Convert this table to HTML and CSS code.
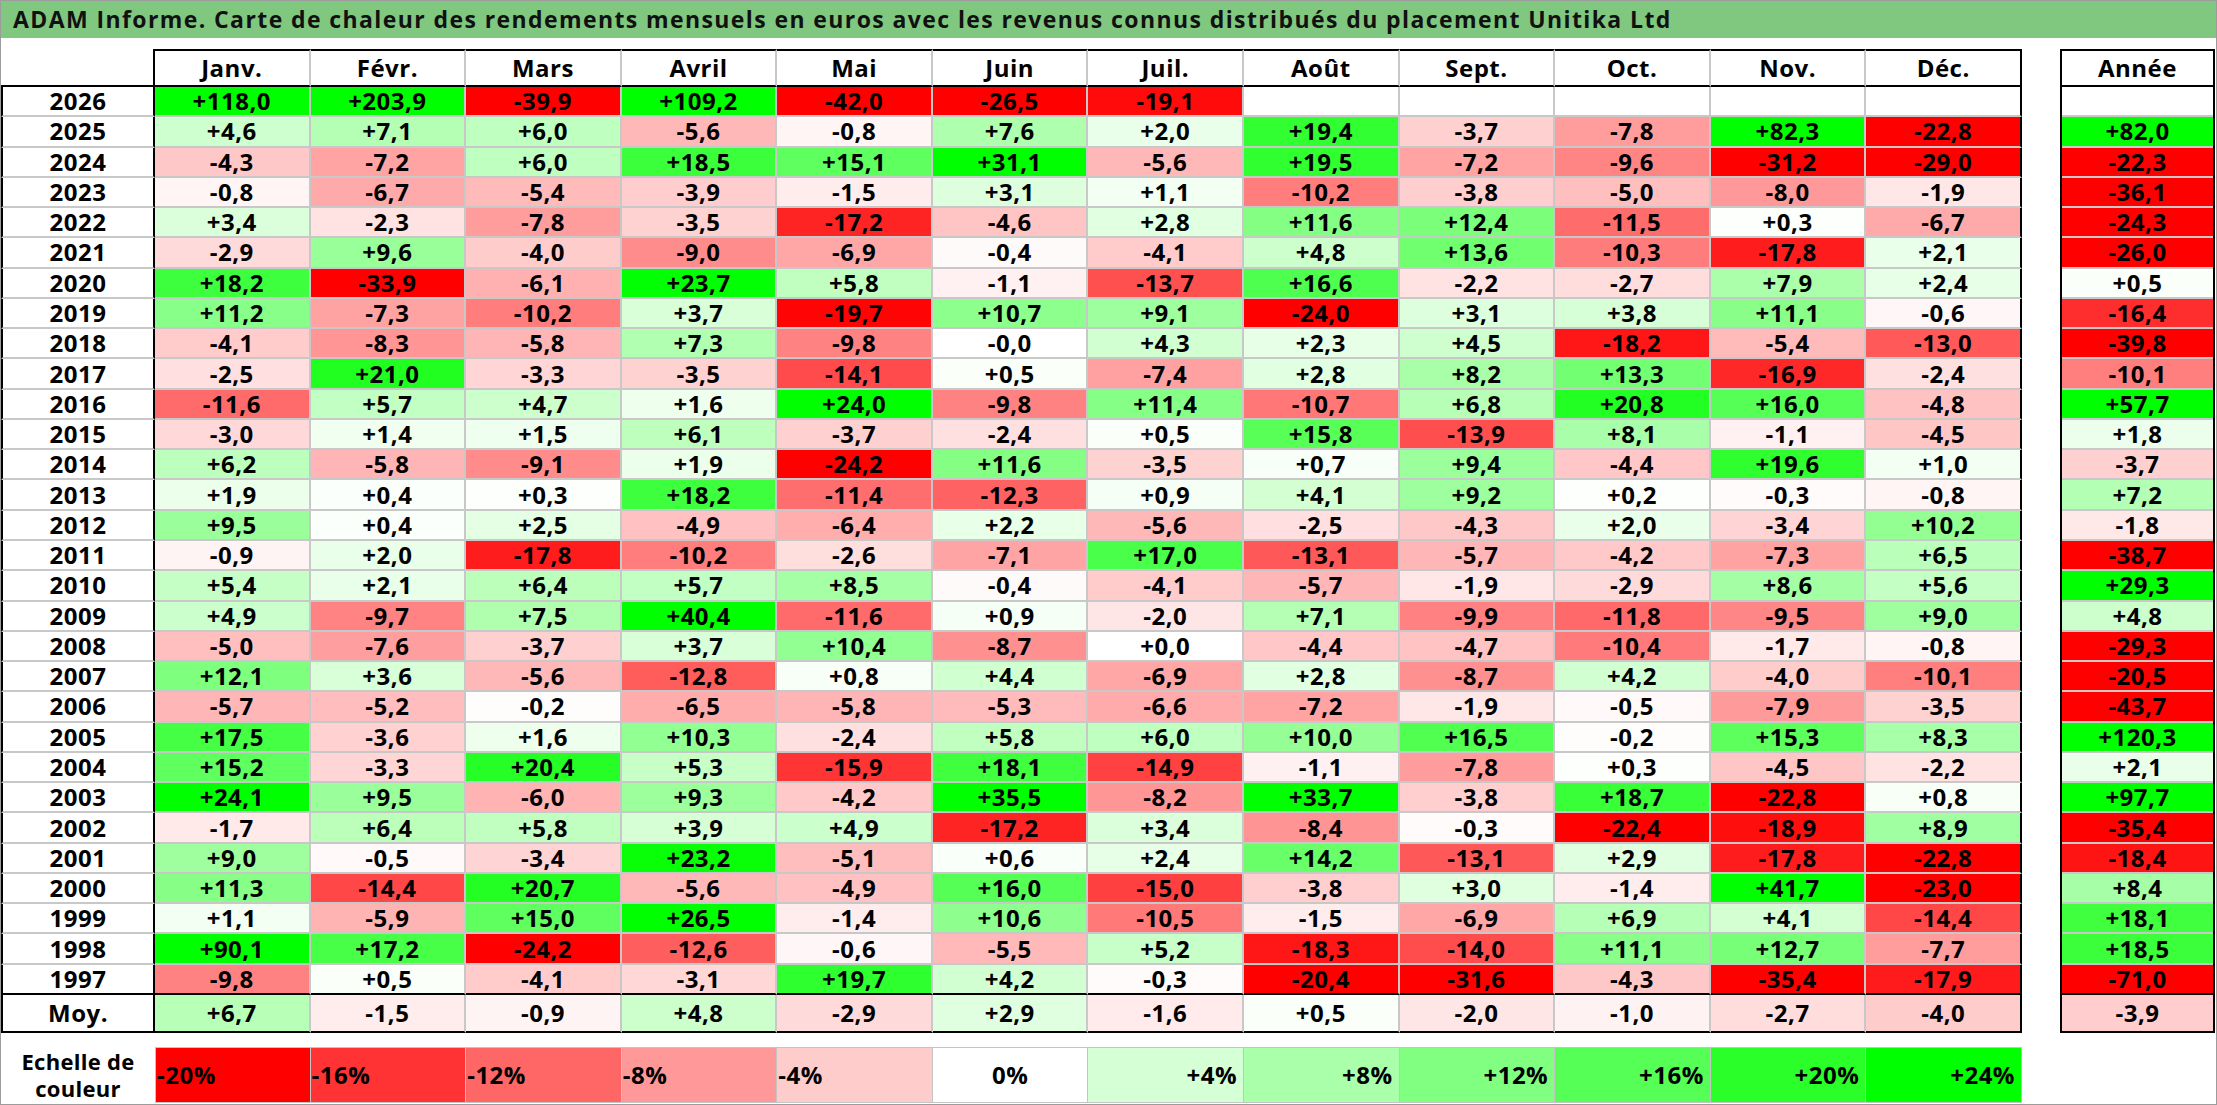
FILE: index.html
```html
<!DOCTYPE html>
<html lang="fr">
<head>
<meta charset="utf-8">
<title>ADAM Informe – Carte de chaleur Unitika Ltd</title>
<link rel="stylesheet" href="styles.css">
</head>
<body>
<div class="sheet">
  <div class="title">ADAM Informe. Carte de chaleur des rendements mensuels en euros avec les revenus connus distribués du placement Unitika Ltd</div>
  <div class="main">
    <div class="heat">
      <div class="row head"><div class="lbl corner"></div><div>Janv.</div><div>Févr.</div><div>Mars</div><div>Avril</div><div>Mai</div><div>Juin</div><div>Juil.</div><div>Août</div><div>Sept.</div><div>Oct.</div><div>Nov.</div><div>Déc.</div></div>
      <div class="row"><div class="lbl">2026</div><div class="v">+118,0</div><div class="v">+203,9</div><div class="v">-39,9</div><div class="v">+109,2</div><div class="v">-42,0</div><div class="v">-26,5</div><div class="v">-19,1</div><div class="v"></div><div class="v"></div><div class="v"></div><div class="v"></div><div class="v"></div></div>
      <div class="row"><div class="lbl">2025</div><div class="v">+4,6</div><div class="v">+7,1</div><div class="v">+6,0</div><div class="v">-5,6</div><div class="v">-0,8</div><div class="v">+7,6</div><div class="v">+2,0</div><div class="v">+19,4</div><div class="v">-3,7</div><div class="v">-7,8</div><div class="v">+82,3</div><div class="v">-22,8</div></div>
      <div class="row"><div class="lbl">2024</div><div class="v">-4,3</div><div class="v">-7,2</div><div class="v">+6,0</div><div class="v">+18,5</div><div class="v">+15,1</div><div class="v">+31,1</div><div class="v">-5,6</div><div class="v">+19,5</div><div class="v">-7,2</div><div class="v">-9,6</div><div class="v">-31,2</div><div class="v">-29,0</div></div>
      <div class="row"><div class="lbl">2023</div><div class="v">-0,8</div><div class="v">-6,7</div><div class="v">-5,4</div><div class="v">-3,9</div><div class="v">-1,5</div><div class="v">+3,1</div><div class="v">+1,1</div><div class="v">-10,2</div><div class="v">-3,8</div><div class="v">-5,0</div><div class="v">-8,0</div><div class="v">-1,9</div></div>
      <div class="row"><div class="lbl">2022</div><div class="v">+3,4</div><div class="v">-2,3</div><div class="v">-7,8</div><div class="v">-3,5</div><div class="v">-17,2</div><div class="v">-4,6</div><div class="v">+2,8</div><div class="v">+11,6</div><div class="v">+12,4</div><div class="v">-11,5</div><div class="v">+0,3</div><div class="v">-6,7</div></div>
      <div class="row"><div class="lbl">2021</div><div class="v">-2,9</div><div class="v">+9,6</div><div class="v">-4,0</div><div class="v">-9,0</div><div class="v">-6,9</div><div class="v">-0,4</div><div class="v">-4,1</div><div class="v">+4,8</div><div class="v">+13,6</div><div class="v">-10,3</div><div class="v">-17,8</div><div class="v">+2,1</div></div>
      <div class="row"><div class="lbl">2020</div><div class="v">+18,2</div><div class="v">-33,9</div><div class="v">-6,1</div><div class="v">+23,7</div><div class="v">+5,8</div><div class="v">-1,1</div><div class="v">-13,7</div><div class="v">+16,6</div><div class="v">-2,2</div><div class="v">-2,7</div><div class="v">+7,9</div><div class="v">+2,4</div></div>
      <div class="row"><div class="lbl">2019</div><div class="v">+11,2</div><div class="v">-7,3</div><div class="v">-10,2</div><div class="v">+3,7</div><div class="v">-19,7</div><div class="v">+10,7</div><div class="v">+9,1</div><div class="v">-24,0</div><div class="v">+3,1</div><div class="v">+3,8</div><div class="v">+11,1</div><div class="v">-0,6</div></div>
      <div class="row"><div class="lbl">2018</div><div class="v">-4,1</div><div class="v">-8,3</div><div class="v">-5,8</div><div class="v">+7,3</div><div class="v">-9,8</div><div class="v">-0,0</div><div class="v">+4,3</div><div class="v">+2,3</div><div class="v">+4,5</div><div class="v">-18,2</div><div class="v">-5,4</div><div class="v">-13,0</div></div>
      <div class="row"><div class="lbl">2017</div><div class="v">-2,5</div><div class="v">+21,0</div><div class="v">-3,3</div><div class="v">-3,5</div><div class="v">-14,1</div><div class="v">+0,5</div><div class="v">-7,4</div><div class="v">+2,8</div><div class="v">+8,2</div><div class="v">+13,3</div><div class="v">-16,9</div><div class="v">-2,4</div></div>
      <div class="row"><div class="lbl">2016</div><div class="v">-11,6</div><div class="v">+5,7</div><div class="v">+4,7</div><div class="v">+1,6</div><div class="v">+24,0</div><div class="v">-9,8</div><div class="v">+11,4</div><div class="v">-10,7</div><div class="v">+6,8</div><div class="v">+20,8</div><div class="v">+16,0</div><div class="v">-4,8</div></div>
      <div class="row"><div class="lbl">2015</div><div class="v">-3,0</div><div class="v">+1,4</div><div class="v">+1,5</div><div class="v">+6,1</div><div class="v">-3,7</div><div class="v">-2,4</div><div class="v">+0,5</div><div class="v">+15,8</div><div class="v">-13,9</div><div class="v">+8,1</div><div class="v">-1,1</div><div class="v">-4,5</div></div>
      <div class="row"><div class="lbl">2014</div><div class="v">+6,2</div><div class="v">-5,8</div><div class="v">-9,1</div><div class="v">+1,9</div><div class="v">-24,2</div><div class="v">+11,6</div><div class="v">-3,5</div><div class="v">+0,7</div><div class="v">+9,4</div><div class="v">-4,4</div><div class="v">+19,6</div><div class="v">+1,0</div></div>
      <div class="row"><div class="lbl">2013</div><div class="v">+1,9</div><div class="v">+0,4</div><div class="v">+0,3</div><div class="v">+18,2</div><div class="v">-11,4</div><div class="v">-12,3</div><div class="v">+0,9</div><div class="v">+4,1</div><div class="v">+9,2</div><div class="v">+0,2</div><div class="v">-0,3</div><div class="v">-0,8</div></div>
      <div class="row"><div class="lbl">2012</div><div class="v">+9,5</div><div class="v">+0,4</div><div class="v">+2,5</div><div class="v">-4,9</div><div class="v">-6,4</div><div class="v">+2,2</div><div class="v">-5,6</div><div class="v">-2,5</div><div class="v">-4,3</div><div class="v">+2,0</div><div class="v">-3,4</div><div class="v">+10,2</div></div>
      <div class="row"><div class="lbl">2011</div><div class="v">-0,9</div><div class="v">+2,0</div><div class="v">-17,8</div><div class="v">-10,2</div><div class="v">-2,6</div><div class="v">-7,1</div><div class="v">+17,0</div><div class="v">-13,1</div><div class="v">-5,7</div><div class="v">-4,2</div><div class="v">-7,3</div><div class="v">+6,5</div></div>
      <div class="row"><div class="lbl">2010</div><div class="v">+5,4</div><div class="v">+2,1</div><div class="v">+6,4</div><div class="v">+5,7</div><div class="v">+8,5</div><div class="v">-0,4</div><div class="v">-4,1</div><div class="v">-5,7</div><div class="v">-1,9</div><div class="v">-2,9</div><div class="v">+8,6</div><div class="v">+5,6</div></div>
      <div class="row"><div class="lbl">2009</div><div class="v">+4,9</div><div class="v">-9,7</div><div class="v">+7,5</div><div class="v">+40,4</div><div class="v">-11,6</div><div class="v">+0,9</div><div class="v">-2,0</div><div class="v">+7,1</div><div class="v">-9,9</div><div class="v">-11,8</div><div class="v">-9,5</div><div class="v">+9,0</div></div>
      <div class="row"><div class="lbl">2008</div><div class="v">-5,0</div><div class="v">-7,6</div><div class="v">-3,7</div><div class="v">+3,7</div><div class="v">+10,4</div><div class="v">-8,7</div><div class="v">+0,0</div><div class="v">-4,4</div><div class="v">-4,7</div><div class="v">-10,4</div><div class="v">-1,7</div><div class="v">-0,8</div></div>
      <div class="row"><div class="lbl">2007</div><div class="v">+12,1</div><div class="v">+3,6</div><div class="v">-5,6</div><div class="v">-12,8</div><div class="v">+0,8</div><div class="v">+4,4</div><div class="v">-6,9</div><div class="v">+2,8</div><div class="v">-8,7</div><div class="v">+4,2</div><div class="v">-4,0</div><div class="v">-10,1</div></div>
      <div class="row"><div class="lbl">2006</div><div class="v">-5,7</div><div class="v">-5,2</div><div class="v">-0,2</div><div class="v">-6,5</div><div class="v">-5,8</div><div class="v">-5,3</div><div class="v">-6,6</div><div class="v">-7,2</div><div class="v">-1,9</div><div class="v">-0,5</div><div class="v">-7,9</div><div class="v">-3,5</div></div>
      <div class="row"><div class="lbl">2005</div><div class="v">+17,5</div><div class="v">-3,6</div><div class="v">+1,6</div><div class="v">+10,3</div><div class="v">-2,4</div><div class="v">+5,8</div><div class="v">+6,0</div><div class="v">+10,0</div><div class="v">+16,5</div><div class="v">-0,2</div><div class="v">+15,3</div><div class="v">+8,3</div></div>
      <div class="row"><div class="lbl">2004</div><div class="v">+15,2</div><div class="v">-3,3</div><div class="v">+20,4</div><div class="v">+5,3</div><div class="v">-15,9</div><div class="v">+18,1</div><div class="v">-14,9</div><div class="v">-1,1</div><div class="v">-7,8</div><div class="v">+0,3</div><div class="v">-4,5</div><div class="v">-2,2</div></div>
      <div class="row"><div class="lbl">2003</div><div class="v">+24,1</div><div class="v">+9,5</div><div class="v">-6,0</div><div class="v">+9,3</div><div class="v">-4,2</div><div class="v">+35,5</div><div class="v">-8,2</div><div class="v">+33,7</div><div class="v">-3,8</div><div class="v">+18,7</div><div class="v">-22,8</div><div class="v">+0,8</div></div>
      <div class="row"><div class="lbl">2002</div><div class="v">-1,7</div><div class="v">+6,4</div><div class="v">+5,8</div><div class="v">+3,9</div><div class="v">+4,9</div><div class="v">-17,2</div><div class="v">+3,4</div><div class="v">-8,4</div><div class="v">-0,3</div><div class="v">-22,4</div><div class="v">-18,9</div><div class="v">+8,9</div></div>
      <div class="row"><div class="lbl">2001</div><div class="v">+9,0</div><div class="v">-0,5</div><div class="v">-3,4</div><div class="v">+23,2</div><div class="v">-5,1</div><div class="v">+0,6</div><div class="v">+2,4</div><div class="v">+14,2</div><div class="v">-13,1</div><div class="v">+2,9</div><div class="v">-17,8</div><div class="v">-22,8</div></div>
      <div class="row"><div class="lbl">2000</div><div class="v">+11,3</div><div class="v">-14,4</div><div class="v">+20,7</div><div class="v">-5,6</div><div class="v">-4,9</div><div class="v">+16,0</div><div class="v">-15,0</div><div class="v">-3,8</div><div class="v">+3,0</div><div class="v">-1,4</div><div class="v">+41,7</div><div class="v">-23,0</div></div>
      <div class="row"><div class="lbl">1999</div><div class="v">+1,1</div><div class="v">-5,9</div><div class="v">+15,0</div><div class="v">+26,5</div><div class="v">-1,4</div><div class="v">+10,6</div><div class="v">-10,5</div><div class="v">-1,5</div><div class="v">-6,9</div><div class="v">+6,9</div><div class="v">+4,1</div><div class="v">-14,4</div></div>
      <div class="row"><div class="lbl">1998</div><div class="v">+90,1</div><div class="v">+17,2</div><div class="v">-24,2</div><div class="v">-12,6</div><div class="v">-0,6</div><div class="v">-5,5</div><div class="v">+5,2</div><div class="v">-18,3</div><div class="v">-14,0</div><div class="v">+11,1</div><div class="v">+12,7</div><div class="v">-7,7</div></div>
      <div class="row last-year"><div class="lbl">1997</div><div class="v">-9,8</div><div class="v">+0,5</div><div class="v">-4,1</div><div class="v">-3,1</div><div class="v">+19,7</div><div class="v">+4,2</div><div class="v">-0,3</div><div class="v">-20,4</div><div class="v">-31,6</div><div class="v">-4,3</div><div class="v">-35,4</div><div class="v">-17,9</div></div>
      <div class="row avg"><div class="lbl">Moy.</div><div class="v">+6,7</div><div class="v">-1,5</div><div class="v">-0,9</div><div class="v">+4,8</div><div class="v">-2,9</div><div class="v">+2,9</div><div class="v">-1,6</div><div class="v">+0,5</div><div class="v">-2,0</div><div class="v">-1,0</div><div class="v">-2,7</div><div class="v">-4,0</div></div>
    </div>
    <div class="year">
      <div class="year-head">Année</div>
      <div class="v"></div>
      <div class="v">+82,0</div>
      <div class="v">-22,3</div>
      <div class="v">-36,1</div>
      <div class="v">-24,3</div>
      <div class="v">-26,0</div>
      <div class="v">+0,5</div>
      <div class="v">-16,4</div>
      <div class="v">-39,8</div>
      <div class="v">-10,1</div>
      <div class="v">+57,7</div>
      <div class="v">+1,8</div>
      <div class="v">-3,7</div>
      <div class="v">+7,2</div>
      <div class="v">-1,8</div>
      <div class="v">-38,7</div>
      <div class="v">+29,3</div>
      <div class="v">+4,8</div>
      <div class="v">-29,3</div>
      <div class="v">-20,5</div>
      <div class="v">-43,7</div>
      <div class="v">+120,3</div>
      <div class="v">+2,1</div>
      <div class="v">+97,7</div>
      <div class="v">-35,4</div>
      <div class="v">-18,4</div>
      <div class="v">+8,4</div>
      <div class="v">+18,1</div>
      <div class="v">+18,5</div>
      <div class="v last-year">-71,0</div>
      <div class="v year-avg">-3,9</div>
    </div>
  </div>
  <div class="scale">
    <div class="scale-label">Echelle de<br>couleur</div>
    <div class="v s left">-20%</div>
    <div class="v s left">-16%</div>
    <div class="v s left">-12%</div>
    <div class="v s left">-8%</div>
    <div class="v s left">-4%</div>
    <div class="v s">0%</div>
    <div class="v s right">+4%</div>
    <div class="v s right">+8%</div>
    <div class="v s right">+12%</div>
    <div class="v s right">+16%</div>
    <div class="v s right">+20%</div>
    <div class="v s right">+24%</div>
  </div>
</div>
<script src="script.js"></script>
</body>
</html>
```

FILE: styles.css
```css
* {
  box-sizing: border-box;
  margin: 0;
  padding: 0;
}

html, body {
  background: #ffffff;
}

body {
  font-family: "Open Sans", "Liberation Sans", sans-serif;
  font-weight: 700;
  color: #000000;
}

.sheet {
  width: 2217px;
  height: 1105px;
  border: 1px solid #9c9c9c;
  display: flex;
  flex-direction: column;
  overflow: hidden;
}

.title {
  flex: none;
  height: 37px;
  background: #80c880;
  color: #111111;
  font-size: 23px;
  line-height: 37px;
  letter-spacing: 1.4px;
  padding-left: 12px;
  white-space: nowrap;
}

.main {
  flex: none;
  display: flex;
  gap: 38px;
  margin-top: 11px;
}

.heat {
  display: grid;
  grid-template-columns: 154px repeat(12, minmax(0, 1fr));
  grid-template-rows: 38px repeat(30, minmax(0, 1fr)) 38px;
  width: 2021px;
  height: 984px;
  font-size: 24px;
  line-height: 1;
  letter-spacing: 0.5px;
}

.row {
  display: contents;
}

.heat .row > div,
.year > div {
  display: flex;
  align-items: center;
  justify-content: center;
  min-height: 0;
  border-bottom: 2px solid #c8c8c8;
  border-right: 2px solid #c8c8c8;
  background: #ffffff;
  white-space: nowrap;
}

.heat .row > div:last-child {
  border-right: 2px solid #000000;
}

.heat .head > div {
  border-top: 2px solid #000000;
  border-bottom: 2px solid #000000;
}

.heat .head > .corner {
  border-top: none;
}

.heat .row > .lbl {
  border-left: 2px solid #000000;
  border-right: 2px solid #000000;
}

.heat .row > .corner {
  border-left: none;
}

.heat .last-year > div {
  border-bottom: 2px solid #000000;
}

.heat .avg > div {
  border-bottom: 2px solid #000000;
}

.year {
  display: grid;
  grid-template-rows: 36px repeat(30, minmax(0, 1fr)) 36px;
  width: 155px;
  height: 984px;
  border: 2px solid #000000;
  font-size: 24px;
  line-height: 1;
  letter-spacing: 0.5px;
}

.year > div {
  border-right: none;
}

.year > .year-head,
.year > .last-year {
  border-bottom: 2px solid #000000;
}

.year > .year-avg {
  border-bottom: none;
}

.scale {
  flex: none;
  display: grid;
  grid-template-columns: 154px repeat(12, minmax(0, 1fr));
  width: 2021px;
  height: 56px;
  margin-top: 14px;
  font-size: 24px;
  line-height: 1;
  letter-spacing: 0.5px;
}

.scale-label {
  display: flex;
  align-items: center;
  justify-content: center;
  text-align: center;
  line-height: 27px;
  font-size: 22px;
  letter-spacing: 0.3px;
}

.scale .s {
  display: flex;
  align-items: center;
  justify-content: center;
  border-top: 1px solid #c4c4c4;
  border-bottom: 1px solid #c4c4c4;
  border-right: 1px solid #c4c4c4;
  background: #ffffff;
}

.scale .s:nth-child(2) {
  border-left: 1px solid #c4c4c4;
}

.scale .left {
  justify-content: flex-start;
  padding-left: 1px;
}

.scale .right {
  justify-content: flex-end;
  padding-right: 6px;
}
```

FILE: script.js
```js
document.querySelectorAll('.v').forEach(function (el) {
  var t = el.textContent.trim();
  if (!t) return;
  var v = parseFloat(t.replace(',', '.'));
  if (isNaN(v)) return;
  var r, g, b, k;
  if (v < 0) {
    k = Math.min(-v / 20, 1);
    r = 255;
    g = b = Math.round(255 * (1 - k));
  } else {
    k = Math.min(v / 24, 1);
    g = 255;
    r = b = Math.round(255 * (1 - k));
  }
  el.style.backgroundColor = 'rgb(' + r + ',' + g + ',' + b + ')';
});
```
